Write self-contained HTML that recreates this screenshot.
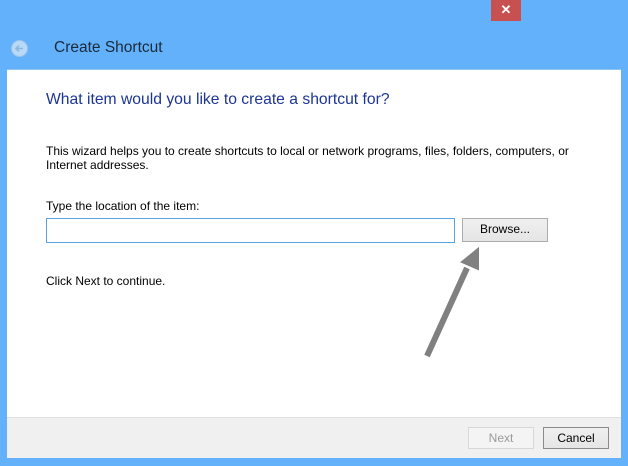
<!DOCTYPE html>
<html><head><style>
body{margin:0;width:628px;height:466px;background:#63b1fb;position:relative;overflow:hidden;font-family:"Liberation Sans",sans-serif;font-size:12px;color:#000}
div{position:absolute;box-sizing:border-box}
.btn{background:linear-gradient(#f0f0f0,#e5e5e5);border:1px solid #acacac;text-align:center;line-height:20px;font-size:12px}
</style></head><body>
<div style="left:491px;top:0;width:30px;height:21px;background:#c75050;color:#fff;text-align:center;line-height:20px;font-size:13px;font-weight:bold">✕</div>
<div style="left:11px;top:40px;width:17px;height:17px;border-radius:50%;background:#b9d9f8;border:1px solid #9cc4ea"></div>
<svg style="position:absolute;left:11px;top:40px" width="17" height="17"><path d="M12 8.5H5M8 5.5L5 8.5L8 11.5" stroke="#8fb6dd" stroke-width="1.6" fill="none"/></svg>
<div style="left:54px;top:39px;font-size:15.5px;color:#1a2a3a">Create Shortcut</div>
<div style="left:7px;top:69px;width:614px;height:348px;background:#fff;border-top:1px solid #8fc4f5"></div>
<div style="left:7px;top:417px;width:614px;height:41px;background:#f0f0f0;border-top:1px solid #dfdfdf"></div>
<div style="left:46px;top:91px;font-size:15.7px;color:#1c3595">What item would you like to create a shortcut for?</div>
<div style="left:46px;top:144px;width:540px;line-height:14px">This wizard helps you to create shortcuts to local or network programs, files, folders, computers, or Internet addresses.</div>
<div style="left:46px;top:199px">Type the location of the item:</div>
<div style="left:46px;top:218px;width:409px;height:25px;border:1px solid #5aa3dc;background:#fff"></div>
<div class="btn" style="left:462px;top:218px;width:86px;height:24px">Browse...</div>
<div style="left:46px;top:274px">Click Next to continue.</div>
<svg style="position:absolute;left:0;top:0" width="628" height="466"><line x1="427" y1="356" x2="467" y2="268" stroke="#808080" stroke-width="6"/><polygon points="478,249 478,269 462,262" fill="#808080" stroke="#808080" stroke-width="2"/></svg>
<div class="btn" style="left:468px;top:427px;width:66px;height:22px;color:#9a9a9a;background:#f4f4f4;border-color:#d8d8d8">Next</div>
<div class="btn" style="left:543px;top:427px;width:66px;height:22px;border-color:#8c8c8c">Cancel</div>
</body></html>
